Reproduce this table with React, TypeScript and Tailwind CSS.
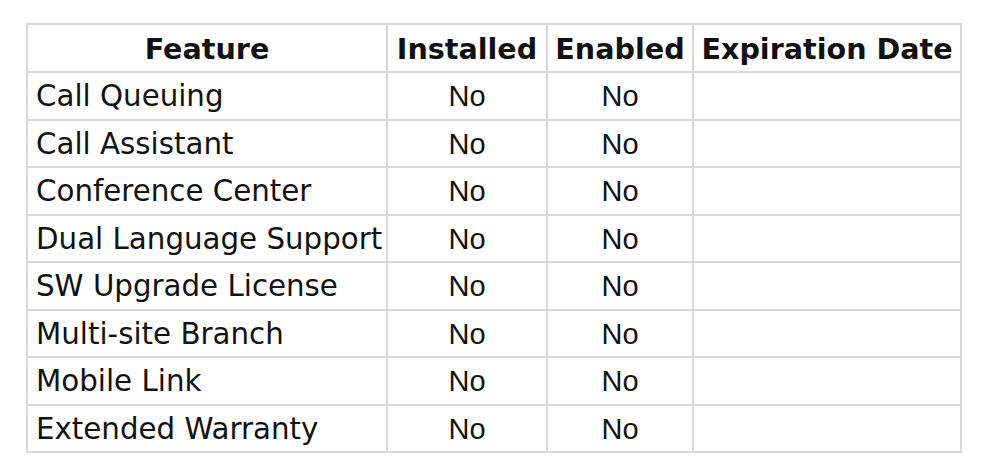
const rows = [
  "Call Queuing",
  "Call Assistant",
  "Conference Center",
  "Dual Language Support",
  "SW Upgrade License",
  "Multi-site Branch",
  "Mobile Link",
  "Extended Warranty",
];

export default function App() {
  return (
    <div className="w-[1000px] h-[465px] bg-white pt-[23px] pl-[26px]">
      <table
        className="table-fixed border-collapse w-[934px] text-[29px] text-[#111]"
        style={{ fontFamily: '"DejaVu Sans", Verdana, sans-serif' }}
      >
        <colgroup>
          <col className="w-[360px]" />
          <col className="w-[160px]" />
          <col className="w-[146px]" />
          <col className="w-[268px]" />
        </colgroup>
        <thead>
          <tr className="h-[48px] text-[28.6px]">
            <th className="border-2 border-[#d9d9d9] font-bold text-center px-1 pt-[2px] leading-none">Feature</th>
            <th className="border-2 border-[#d9d9d9] font-bold text-center px-0 pt-[2px] leading-none whitespace-nowrap">Installed</th>
            <th className="border-2 border-[#d9d9d9] font-bold text-center px-0 pt-[2px] leading-none whitespace-nowrap">Enabled</th>
            <th className="border-2 border-[#d9d9d9] font-bold text-center px-0 pt-[2px] leading-none whitespace-nowrap">Expiration Date</th>
          </tr>
        </thead>
        <tbody>
          {rows.map((name) => (
            <tr key={name} className="h-[47.5px]">
              <td className="border-2 border-[#d9d9d9] pl-[8px] pt-[2px] text-[29.3px] leading-none whitespace-nowrap">{name}</td>
              <td
                className="border-2 border-[#d9d9d9] text-center pt-[2px] leading-none"
                style={{ fontFamily: '"Liberation Sans", Arial, sans-serif' }}
              >
                No
              </td>
              <td
                className="border-2 border-[#d9d9d9] text-center pt-[2px] leading-none"
                style={{ fontFamily: '"Liberation Sans", Arial, sans-serif' }}
              >
                No
              </td>
              <td className="border-2 border-[#d9d9d9]"></td>
            </tr>
          ))}
        </tbody>
      </table>
    </div>
  );
}
